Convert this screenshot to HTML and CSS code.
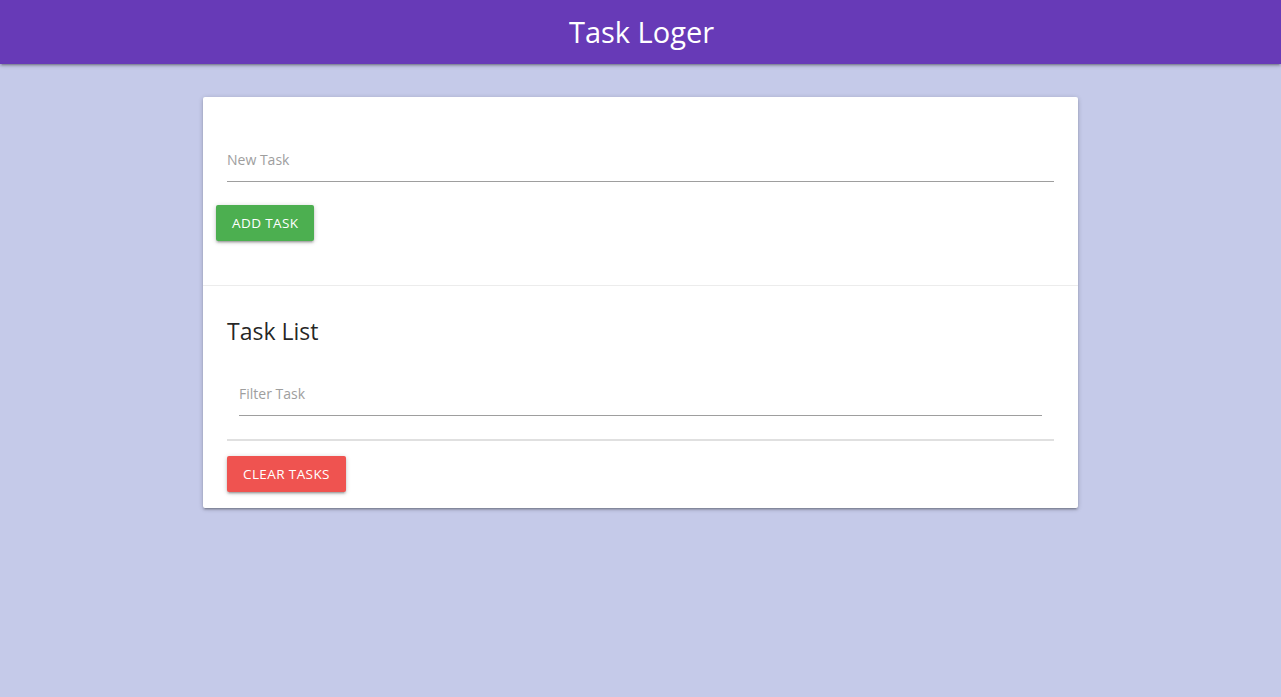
FILE: index.html
```html
<!DOCTYPE html>
<html lang="en">
<head>
<meta charset="utf-8">
<title>Task Loger</title>
<link rel="stylesheet" href="styles.css">
</head>
<body>
<nav class="navbar">
  <span class="brand">Task Loger</span>
</nav>
<main class="container">
  <div class="card">
    <form class="card-content">
      <div class="input-field">
        <input type="text" class="field" placeholder="New Task">
      </div>
      <button type="button" class="btn btn-green">Add Task</button>
    </form>
    <div class="card-action">
      <h5 class="title">Task List</h5>
      <div class="input-field indent">
        <input type="text" class="field" placeholder="Filter Task">
      </div>
      <ul class="collection"></ul>
      <button type="button" class="btn btn-red">Clear Tasks</button>
    </div>
  </div>
</main>
</body>
</html>
```
FILE: styles.css
```css
* { box-sizing: border-box; }
html, body { margin: 0; padding: 0; }
body {
  background: #c5cae9;
  font-family: "Open Sans", "Noto Sans", sans-serif;
  color: rgba(0,0,0,0.87);
  min-height: 697px;
}
.navbar {
  height: 64px;
  background: #673ab7;
  display: flex;
  justify-content: center;
  align-items: center;
  box-shadow: 0 2px 2px 0 rgba(0,0,0,.14), 0 3px 1px -2px rgba(0,0,0,.12), 0 1px 5px 0 rgba(0,0,0,.2);
}
.brand {
  color: #fff;
  font-size: 29px;
  line-height: 64px;
  margin-left: 2px;
}
.container {
  width: 875px;
  margin: 33px auto 0;
}
.card {
  background: #fff;
  border-radius: 2px;
  box-shadow: 0 2px 2px 0 rgba(0,0,0,.14), 0 3px 1px -2px rgba(0,0,0,.12), 0 1px 5px 0 rgba(0,0,0,.2);
}
.card-content {
  padding: 40px 24px 44px;
  margin: 0;
}
.input-field { margin: 0 0 23px; }
.input-field.indent { margin: 26px 12px 23px; }
.field {
  display: block;
  width: 100%;
  height: 45px;
  border: none;
  border-bottom: 1px solid #9e9e9e;
  outline: none;
  padding: 0;
  background: transparent;
  font-family: inherit;
  font-size: 14px;
  color: rgba(0,0,0,0.87);
}
.field::placeholder { color: #9e9e9e; }
.btn {
  display: inline-block;
  height: 36px;
  line-height: 36px;
  padding: 0 16px;
  border: none;
  border-radius: 2px;
  color: #fff;
  font-family: inherit;
  font-size: 13.5px;
  letter-spacing: .4px;
  text-transform: uppercase;
  cursor: pointer;
  box-shadow: 0 2px 2px 0 rgba(0,0,0,.14), 0 3px 1px -2px rgba(0,0,0,.12), 0 1px 5px 0 rgba(0,0,0,.2);
}
.btn-green { background: #4caf50; margin-left: -11px; }
.btn-red { background: #ef5350; }
.card-action {
  border-top: 1px solid rgba(160,160,160,.2);
  padding: 16px 24px;
}
.title {
  font-size: 23px;
  font-weight: 400;
  line-height: 27px;
  margin: 16px 0 10px;
}
.collection {
  list-style: none;
  margin: 0 0 15px;
  padding: 0;
  border-top: 1px solid #e0e0e0;
  border-bottom: 1px solid #e0e0e0;
}
```
